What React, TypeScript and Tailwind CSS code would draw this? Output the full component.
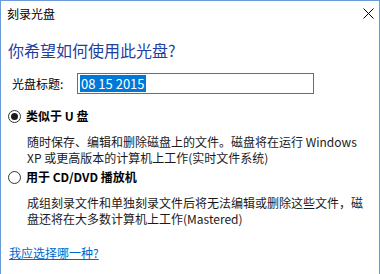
import React from 'react';

const font = { fontFamily: '"Noto Sans CJK SC", "Noto Sans", sans-serif' };

const Radio: React.FC<{ checked?: boolean }> = ({ checked }) => (
  <span className="flex h-[13px] w-[13px] shrink-0 items-center justify-center rounded-full border border-[#333333] bg-white">
    {checked && <span className="h-[7px] w-[7px] rounded-full bg-[#1a1a1a]" />}
  </span>
);

const Option: React.FC<{ checked?: boolean; label: string; lines: string[] }> = ({ checked, label, lines }) => (
  <div className="flex flex-col">
    <label className="flex items-center gap-[5px] pl-[7px] h-[16px]">
      <Radio checked={checked} />
      <span className="text-[12px] font-bold leading-[16px] text-black">{label}</span>
    </label>
    <div className="mt-[10px] pl-[26px] text-[12px] leading-[16px] text-[#1a1a1a]">
      {lines.map((l) => (
        <div key={l} className="whitespace-nowrap">{l}</div>
      ))}
    </div>
  </div>
);

export default function App() {
  return (
    <div
      className="flex h-[274px] w-[380px] flex-col overflow-hidden border-x border-t border-[#6b9bd8] bg-white"
      style={font}
    >
      {/* title bar */}
      <div className="flex h-[25px] shrink-0 items-center justify-between pl-[6px] pr-[5px]">
        <span className="text-[12px] leading-[16px] text-black">刻录光盘</span>
        <svg width="11" height="11" viewBox="0 0 11 11" className="text-black">
          <path d="M0.5 0.5 L10.5 10.5 M10.5 0.5 L0.5 10.5" stroke="currentColor" strokeWidth="1" />
        </svg>
      </div>

      <h1 className="mt-[14px] pl-[7px] text-[16px] leading-[20px] text-[#1f3f9e]">你希望如何使用此光盘?</h1>

      <div className="mt-[13px] flex items-center pl-[11px]">
        <span className="w-[65px] text-[12px] leading-[16px] text-black">光盘标题:</span>
        <div className="flex h-[21px] w-[237px] items-center border border-[#2d7ad0] px-[2px]">
          <span className="bg-[#0078d7] px-[1px] text-[13px] leading-[17px] text-white">08 15 2015</span>
        </div>
      </div>

      <div className="mt-[14px] flex flex-col gap-[3px]">
        <Option
          checked
          label="类似于 U 盘"
          lines={['随时保存、编辑和删除磁盘上的文件。磁盘将在运行 Windows', 'XP 或更高版本的计算机上工作(实时文件系统)']}
        />
        <Option
          label="用于 CD/DVD 播放机"
          lines={['成组刻录文件和单独刻录文件后将无法编辑或删除这些文件，磁', '盘还将在大多数计算机上工作(Mastered)']}
        />
      </div>

      <a href="#" className="mt-[18px] self-start pl-[8px] text-[12px] leading-[16px] text-[#0066cc] underline">
        我应选择哪一种?
      </a>
    </div>
  );
}
